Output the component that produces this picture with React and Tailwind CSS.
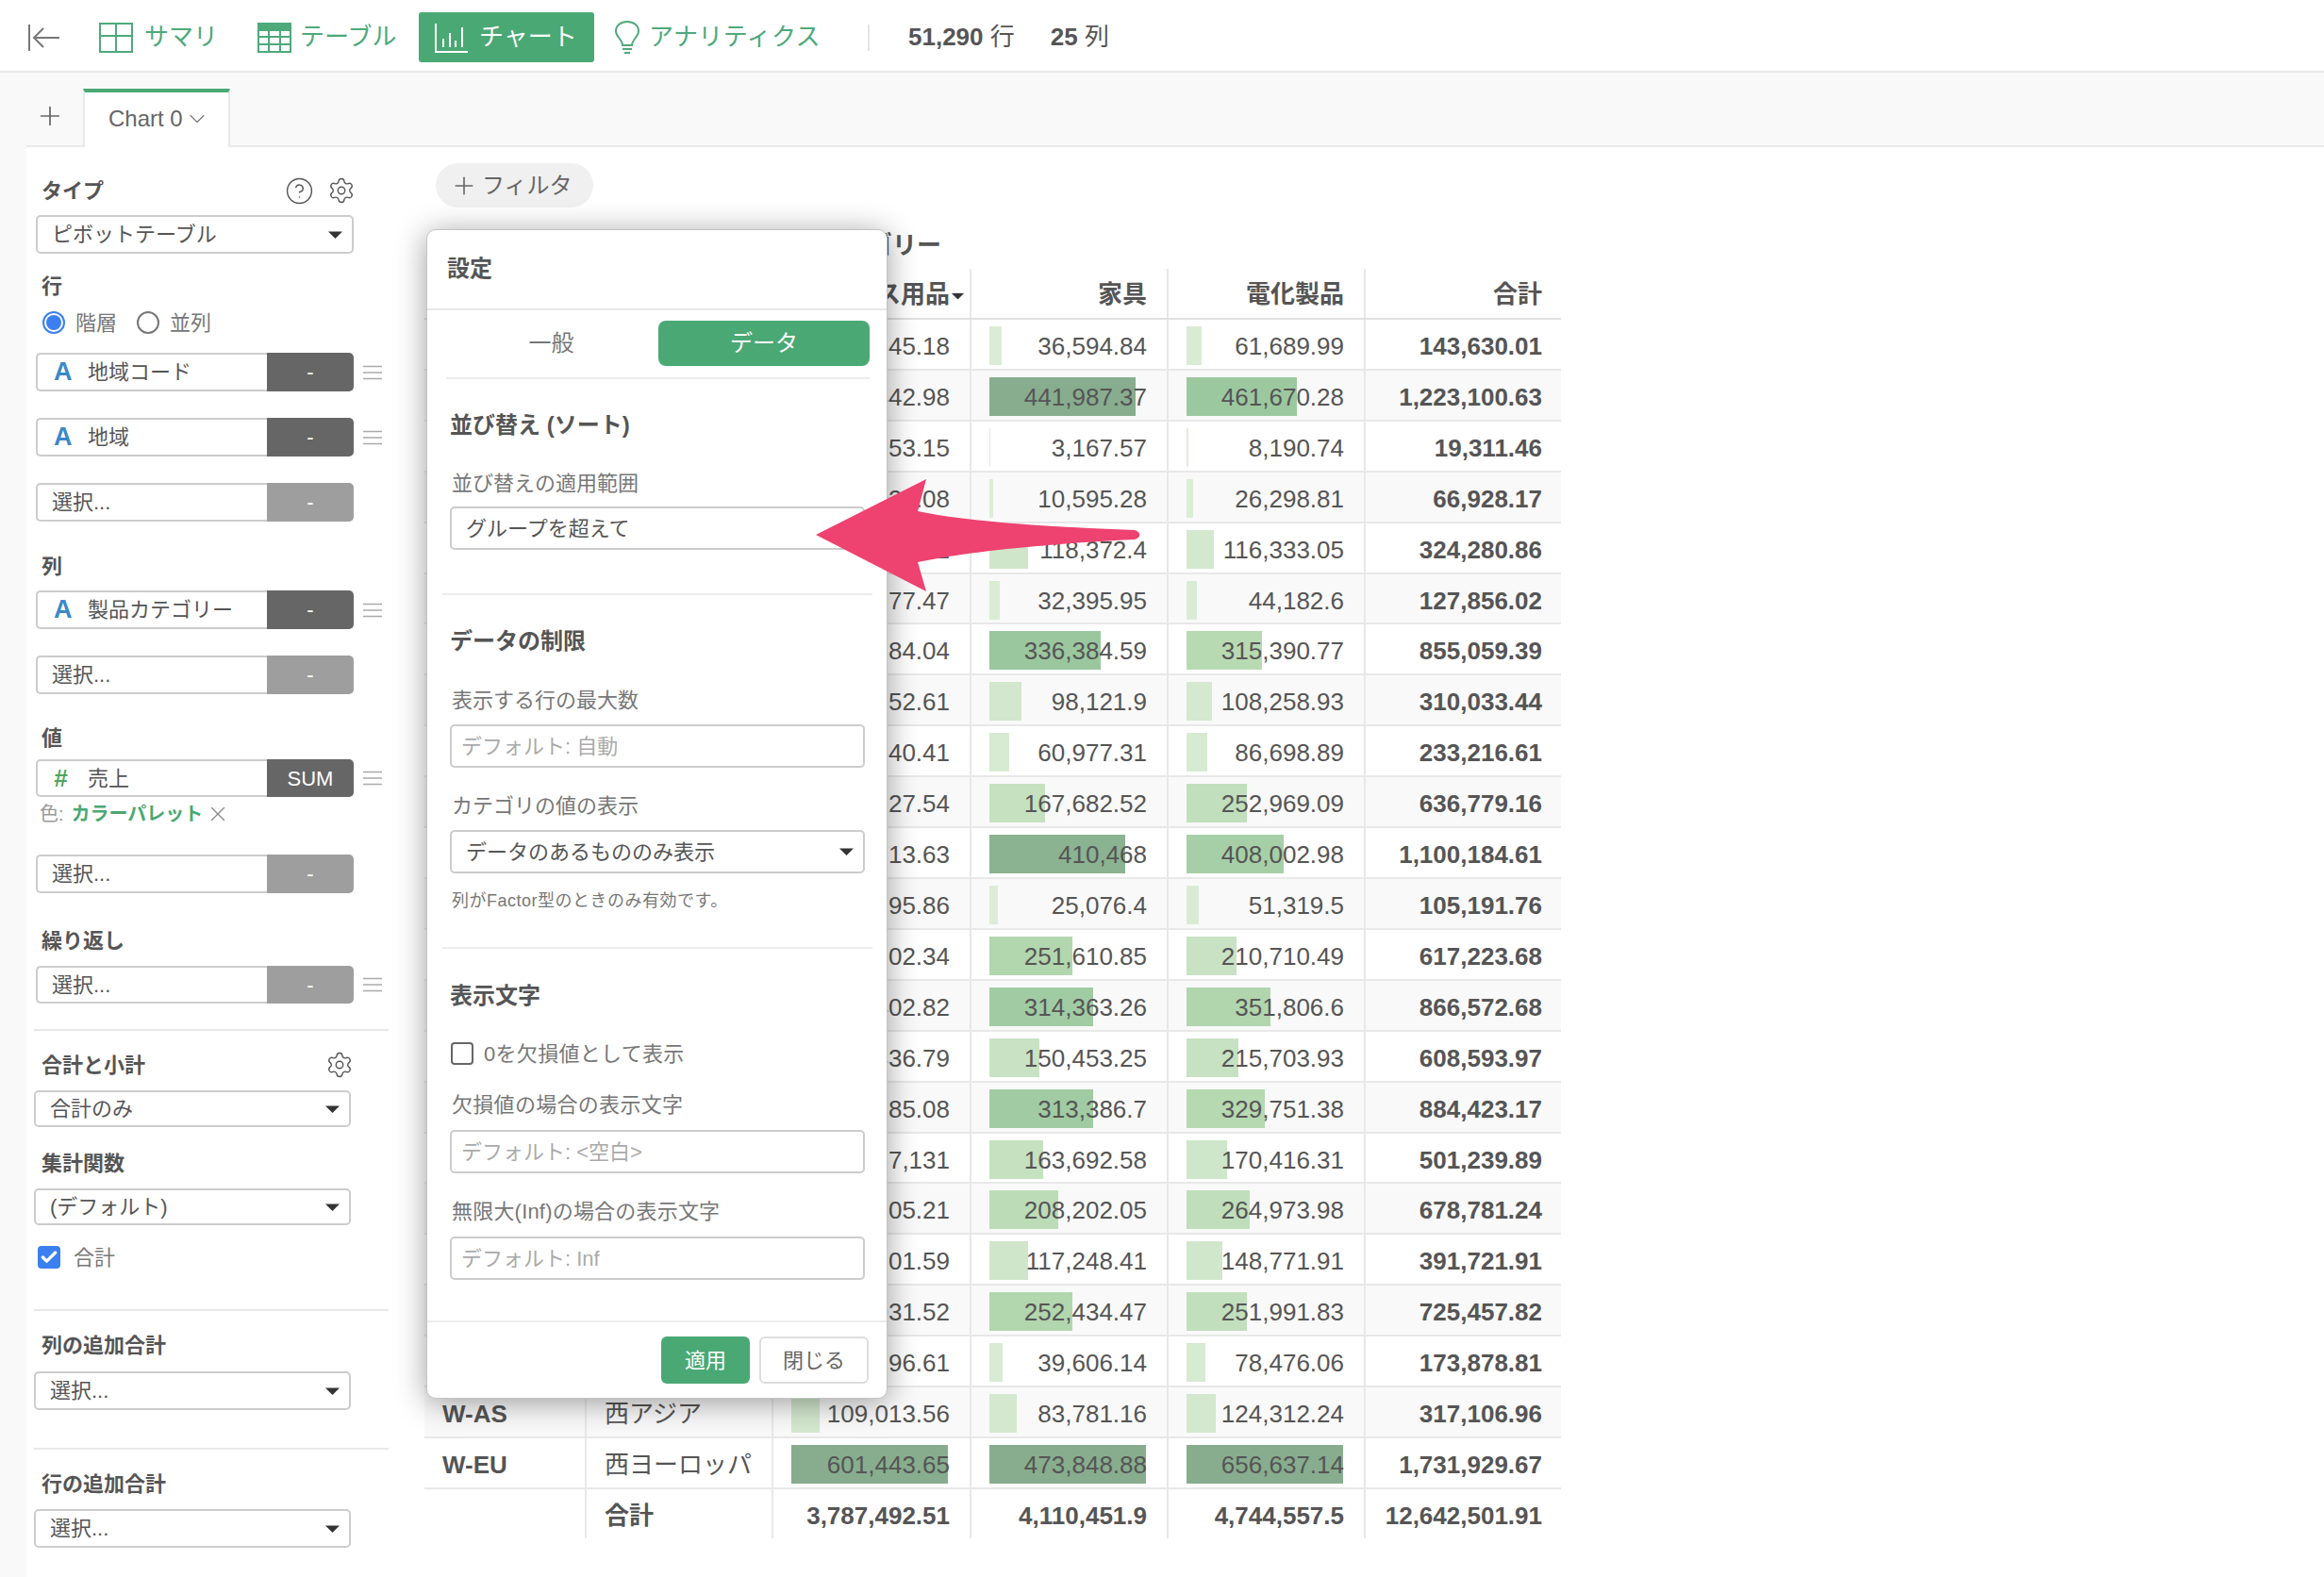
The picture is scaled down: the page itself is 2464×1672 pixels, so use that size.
import React from 'react';
import { Settings, CircleHelp, Plus, ChevronDown, Check, X } from 'lucide-react';

const office = ['45,345.18','319,442.98','7,953.15','30,034.08','89,575.42','51,277.47','203,284.04','103,652.61','85,540.41','216,127.54','281,713.63','28,795.86','154,902.34','200,402.82','242,436.79','241,285.08','167,131','205,605.21','125,701.59','221,031.52','55,796.61','109,013.56','601,443.65'];
const furn = ['36,594.84','441,987.37','3,167.57','10,595.28','118,372.4','32,395.95','336,384.59','98,121.9','60,977.31','167,682.52','410,468','25,076.4','251,610.85','314,363.26','150,453.25','313,386.7','163,692.58','208,202.05','117,248.41','252,434.47','39,606.14','83,781.16','473,848.88'];
const elec = ['61,689.99','461,670.28','8,190.74','26,298.81','116,333.05','44,182.6','315,390.77','108,258.93','86,698.89','252,969.09','408,002.98','51,319.5','210,710.49','351,806.6','215,703.93','329,751.38','170,416.31','264,973.98','148,771.91','251,991.83','78,476.06','124,312.24','656,637.14'];
const total = ['143,630.01','1,223,100.63','19,311.46','66,928.17','324,280.86','127,856.02','855,059.39','310,033.44','233,216.61','636,779.16','1,100,184.61','105,191.76','617,223.68','866,572.68','608,593.97','884,423.17','501,239.89','678,781.24','391,721.91','725,457.82','173,878.81','317,106.96','1,731,929.67'];

const num = (s) => parseFloat(s.replace(/,/g, ''));
const stops = [[0,[223,238,218]],[0.25,[207,230,202]],[0.5,[182,217,177]],[0.7,[156,200,160]],[0.9,[135,173,142]],[1,[135,173,142]]];
function barColor(r) {
  for (let i = 1; i < stops.length; i++) {
    if (r <= stops[i][0]) {
      const [a, ca] = stops[i - 1];
      const [b, cb] = stops[i];
      const t = (r - a) / (b - a);
      return `rgb(${ca.map((c, j) => Math.round(c + (cb[j] - c) * t)).join(',')})`;
    }
  }
  return 'rgb(135,173,142)';
}

function BarCell({ value, max, w }) {
  const r = num(value) / max;
  return (
    <div className={`relative h-full border-l-2 border-[#e8e8e8] text-right pr-[21px] leading-[57px] ${w}`}>
      <div className="absolute left-[19px] top-[7px] h-[41px]" style={{ width: `${Math.max(r * 166, 1)}px`, background: barColor(r) }} />
      <span className="relative">{value}</span>
    </div>
  );
}

function Caret({ className = '' }) {
  return (
    <svg width="15" height="8" viewBox="0 0 15 8" className={className}>
      <path d="M0 0.5H15L7.5 8Z" fill="#333" />
    </svg>
  );
}

function SideLabel({ children, className = '' }) {
  return <div className={`h-[30px] leading-[32px] text-[22px] font-bold text-[#555] ml-[8px] ${className}`}>{children}</div>;
}

function SideSelect({ children, className = '', w = 'w-[336px]', h = 'h-[41px]' }) {
  return (
    <div className={`flex items-center justify-between border-2 border-[#ccc] rounded-[5px] bg-white pl-[15px] pr-[10px] text-[22px] text-[#555] ${w} ${h} ${className}`}>
      <span>{children}</span>
      <Caret />
    </div>
  );
}

function Menu() {
  return (
    <svg width="20" height="16" viewBox="0 0 20 16" className="ml-[10px]">
      <path d="M0 1.5H20M0 8H20M0 14.5H20" stroke="#aaa" strokeWidth="1.6" />
    </svg>
  );
}

function Field({ type, label, btn = '-', on = false, menu = false, className = '', h = 'h-[41px]' }) {
  return (
    <div className={`flex items-center ml-[2px] ${className}`}>
      <div className={`flex w-[337px] ${h}`}>
        <div className="flex-1 flex items-center border-2 border-r-0 border-[#ccc] rounded-l-[5px] bg-white pl-[15px] text-[22px] text-[#555]">
          {type === 'A' && <span className="w-[38px] pl-[2px] font-bold text-[27px] text-[#3b88c9]">A</span>}
          {type === '#' && <span className="w-[38px] pl-[2px] font-bold text-[26px] italic text-[#4fa55b]">#</span>}
          <span>{label}</span>
        </div>
        <div className={`w-[92px] flex items-center justify-center rounded-r-[5px] text-white text-[22px] ${on ? 'bg-[#666]' : 'bg-[#9e9e9e]'}`}>{btn}</div>
      </div>
      {menu && <Menu />}
    </div>
  );
}

function ModalLabel({ children, className = '' }) {
  return <div className={`h-[30px] leading-[30px] text-[22px] text-[#777] ml-[26px] ${className}`}>{children}</div>;
}
function ModalHead({ children, className = '' }) {
  return <div className={`h-[30px] leading-[31px] text-[24px] font-bold text-[#555] ml-[24px] ${className}`}>{children}</div>;
}
function ModalInput({ children, className = '' }) {
  return (
    <div className={`ml-[24px] w-[440px] h-[46px] flex items-center border-2 border-[#ccc] rounded-[5px] pl-[10px] text-[22px] text-[#aaa] ${className}`}>{children}</div>
  );
}
function ModalSelect({ children, className = '' }) {
  return (
    <div className={`ml-[24px] w-[440px] h-[46px] flex items-center justify-between border-2 border-[#ccc] rounded-[5px] pl-[15px] pr-[10px] text-[22px] text-[#555] ${className}`}>
      <span>{children}</span>
      <Caret />
    </div>
  );
}

const ColorGreen = '#4aa874';

function NavText({ children, className = '' }) {
  return <span className={`text-[26px] text-[#4ea97b] ${className}`}>{children}</span>;
}

export default function App() {
  return (
    <div className="relative h-[1672px] w-[2464px] overflow-hidden bg-[#f9f9f9] font-['Liberation_Sans','Noto_Sans_CJK_JP',sans-serif] text-[#555]">
      {/* top bar */}
      <div className="h-[77px] bg-white border-b-2 border-[#e8e8e8] flex items-center pl-[30px] pt-[4px]">
        <svg width="34" height="30" viewBox="0 0 34 30" fill="none" stroke="#777" strokeWidth="2">
          <path d="M1 1V29" />
          <path d="M33 15H7M16 5L6 15L16 25" />
        </svg>
        <svg width="36" height="32" viewBox="0 0 36 32" fill="none" stroke="#4ea97b" strokeWidth="2" className="ml-[41px]">
          <rect x="1" y="1" width="34" height="30" />
          <path d="M18 1V31M1 14H35" />
        </svg>
        <NavText className="ml-[12px] w-[120px]">サマリ</NavText>
        <svg width="36" height="32" viewBox="0 0 36 32" fill="none" stroke="#4ea97b" strokeWidth="2">
          <rect x="1" y="1" width="34" height="30" />
          <rect x="1" y="1" width="34" height="7" fill="#4ea97b" />
          <path d="M12 1V31M24 1V31M1 15H35M1 23H35" />
        </svg>
        <NavText className="ml-[9px] w-[126px]">テーブル</NavText>
        <div className="h-[53px] w-[186px] bg-[#4aa874] rounded-[3px] flex items-center pl-[17px]">
          <svg width="36" height="32" viewBox="0 0 36 32" fill="none" stroke="#fff" strokeWidth="2">
            <path d="M1 1V31H35" />
            <path d="M9 17V26M16 11V26M22 19V26M29 5V26" strokeWidth="2" />
          </svg>
          <span className="ml-[11px] text-[26px] text-white">チャート</span>
        </div>
        <svg width="30" height="36" viewBox="0 0 30 36" fill="none" stroke="#4ea97b" strokeWidth="2" className="ml-[20px]">
          <path d="M10 26C10 20 3 17 3 11C3 5 8 1 15 1C22 1 27 5 27 11C27 17 20 20 20 26Z" />
          <path d="M10 30H20M12 34H18" />
        </svg>
        <NavText className="ml-[8px] w-[232px] tracking-[0.4px]">アナリティクス</NavText>
        <div className="w-[2px] h-[28px] bg-[#e4e4e4]" />
        <span className="ml-[41px] text-[26px] text-[#555]"><b>51,290</b> 行</span>
        <span className="ml-[38px] text-[26px] text-[#555]"><b>25</b> 列</span>
      </div>

      {/* tab row */}
      <div className="ml-[28px] h-[79px] border-b-2 border-[#e8e8e8] flex items-end">
        <div className="w-[60px] h-[60px] flex items-center justify-center pr-[10px] pb-[3px] text-[#666]">
          <Plus size={32} strokeWidth={1.3} />
        </div>
        <div className="-mb-[2px] w-[156px] h-[62px] bg-white border-x-2 border-x-[#e8e8e8] border-t-4 border-t-[#4aa874] flex items-center pl-[25px] pb-[2px] text-[24px] text-[#666]">
          Chart 0
          <ChevronDown size={28} strokeWidth={1} className="ml-[1px] text-[#777]" />
        </div>
      </div>

      {/* body */}
      <div className="ml-[28px] h-[1516px] bg-white flex">
        {/* sidebar */}
        <div className="w-[422px] pl-[8px] pt-[31px]">
          <div className="flex items-center w-[341px] h-[30px]">
            <SideLabel className="flex-1">タイプ</SideLabel>
            <CircleHelp size={31} strokeWidth={1.1} className="text-[#555] mr-[14px]" />
            <Settings size={30} strokeWidth={1.1} className="text-[#555]" />
          </div>
          <SideSelect w="w-[337px]" className="mt-[11px] ml-[2px]">ピボットテーブル</SideSelect>
          <SideLabel className="mt-[19px]">行</SideLabel>
          <div className="mt-[9px] h-[30px] ml-[9px] flex items-center text-[22px] text-[#777]">
            <span className="w-[24px] h-[24px] rounded-full border-2 border-[#3b7ff0] flex items-center justify-center">
              <span className="w-[16px] h-[16px] rounded-full bg-[#3b7ff0]" />
            </span>
            <span className="ml-[11px]">階層</span>
            <span className="ml-[21px] w-[24px] h-[24px] rounded-full border-2 border-[#777]" />
            <span className="ml-[11px]">並列</span>
          </div>
          <Field type="A" label="地域コード" on menu className="mt-[17px]" />
          <Field type="A" label="地域" on menu className="mt-[28px]" />
          <Field label="選択..." className="mt-[28px]" />
          <SideLabel className="mt-[32px]">列</SideLabel>
          <Field type="A" label="製品カテゴリー" on menu className="mt-[11px]" />
          <Field label="選択..." className="mt-[28px]" />
          <SideLabel className="mt-[31px]">値</SideLabel>
          <Field type="#" label="売上" btn="SUM" on menu className="mt-[8px]" h="h-[40px]" />
          <div className="mt-[6px] h-[24px] leading-[24px] ml-[6px] flex items-center text-[20px] text-[#999]">
            色:<b className="ml-[8px] text-[#4aa874]">カラーパレット</b>
            <X size={26} strokeWidth={1.2} className="ml-[3px] text-[#888]" />
          </div>
          <Field label="選択..." className="mt-[31px]" />
          <SideLabel className="mt-[35px]">繰り返し</SideLabel>
          <Field label="選択..." menu className="mt-[12px]" h="h-[40px]" />
          <div className="mt-[27px] h-[2px] w-[376px] bg-[#e8e8e8]" />
          <div className="mt-[21px] flex items-center w-[339px] h-[30px]">
            <SideLabel className="flex-1">合計と小計</SideLabel>
            <Settings size={30} strokeWidth={1.1} className="text-[#555]" />
          </div>
          <SideSelect className="mt-[12px]" h="h-[39px]">合計のみ</SideSelect>
          <SideLabel className="mt-[23px]">集計関数</SideLabel>
          <SideSelect className="mt-[12px]" h="h-[39px]">(デフォルト)</SideSelect>
          <div className="mt-[22px] h-[24px] ml-[4px] flex items-center text-[22px] text-[#777]">
            <span className="w-[24px] h-[24px] rounded-[4px] bg-[#3b7ff0] flex items-center justify-center">
              <Check size={20} strokeWidth={4} className="text-white" />
            </span>
            <span className="ml-[14px]">合計</span>
          </div>
          <div className="mt-[43px] h-[2px] w-[376px] bg-[#e8e8e8]" />
          <SideLabel className="mt-[21px]">列の追加合計</SideLabel>
          <SideSelect className="mt-[13px]">選択...</SideSelect>
          <div className="mt-[40px] h-[2px] w-[376px] bg-[#e8e8e8]" />
          <SideLabel className="mt-[21px]">行の追加合計</SideLabel>
          <SideSelect className="mt-[12px]">選択...</SideSelect>
        </div>

        {/* main */}
        <div className="w-[1205px] pt-[17px]">
          <div className="ml-[12px] w-[167px] h-[47px] rounded-full bg-[#f0f0f0] flex items-center pl-[15px] text-[24px] text-[#666]">
            <Plus size={30} strokeWidth={1.3} className="mr-[4px]" />
            フィルタ
          </div>
          <div className="mt-[25px] h-[30px] leading-[31px] pl-[366px] text-[26px] font-bold text-[#555]">製品カテゴリー</div>
          <div className="mt-[10px] text-[26px] text-[#555]">
            <div className="h-[54px] flex border-b-2 border-[#e0e0e0] font-bold leading-[54px]">
              <div className="w-[170px]" />
              <div className="w-[198px]" />
              <div className="w-[210px] border-l-2 border-[#e8e8e8] pr-[21px] flex justify-end relative">
                オフィス用品
                <Caret className="absolute right-[5px] top-[25px] scale-90" />
              </div>
              <div className="w-[209px] border-l-2 border-[#e8e8e8] pr-[21px] text-right">家具</div>
              <div className="w-[209px] border-l-2 border-[#e8e8e8] pr-[21px] text-right">電化製品</div>
              <div className="w-[208px] border-l-2 border-[#e8e8e8] pr-[19px] text-right">合計</div>
            </div>
            {office.map((o, i) => (
              <div key={i} className={`h-[53.91px] flex border-b-2 border-[#e8e8e8] ${i % 2 === 1 ? 'bg-[#f9f9f9]' : 'bg-white'}`}>
                <div className="w-[170px] pl-[19px] font-bold leading-[57px]">{i === 21 ? 'W-AS' : i === 22 ? 'W-EU' : ''}</div>
                <div className="w-[198px] border-l-2 border-[#e8e8e8] pl-[19px] leading-[57px]">{i === 21 ? '西アジア' : i === 22 ? '西ヨーロッパ' : ''}</div>
                <BarCell value={o} max={601443.65} w="w-[210px]" />
                <BarCell value={furn[i]} max={473848.88} w="w-[209px]" />
                <BarCell value={elec[i]} max={656637.14} w="w-[209px]" />
                <div className="w-[208px] border-l-2 border-[#e8e8e8] pr-[19px] text-right font-bold leading-[57px]">{total[i]}</div>
              </div>
            ))}
            <div className="h-[52px] flex font-bold leading-[57px]">
              <div className="w-[170px]" />
              <div className="w-[198px] border-l-2 border-[#e8e8e8] pl-[19px]">合計</div>
              <div className="w-[210px] border-l-2 border-[#e8e8e8] pr-[21px] text-right">3,787,492.51</div>
              <div className="w-[209px] border-l-2 border-[#e8e8e8] pr-[21px] text-right">4,110,451.9</div>
              <div className="w-[209px] border-l-2 border-[#e8e8e8] pr-[21px] text-right">4,744,557.5</div>
              <div className="w-[208px] border-l-2 border-[#e8e8e8] pr-[19px] text-right">12,642,501.91</div>
            </div>
          </div>
        </div>
      </div>

      {/* settings modal */}
      <div className="absolute left-[452px] top-[243px] w-[489px] h-[1240px] bg-white rounded-[10px] border border-[#c4c4c4] shadow-[0_4px_32px_rgba(0,0,0,0.38)] pt-[26px]">
        <div className="h-[30px] leading-[30px] ml-[21px] text-[24px] font-bold text-[#555]">設定</div>
        <div className="mt-[27px] h-[2px] bg-[#e8e8e8]" />
        <div className="mt-[11px] flex items-center h-[48px] pl-[20px]">
          <div className="w-[225px] text-center text-[24px] text-[#777] pr-[2px]">一般</div>
          <div className="w-[224px] h-[48px] rounded-[8px] flex items-center justify-center text-[24px] text-white" style={{ background: ColorGreen }}>データ</div>
        </div>
        <div className="mt-[12px] ml-[20px] w-[449px] h-[2px] bg-[#ececec]" />
        <ModalHead className="mt-[33px]">並び替え (ソート)</ModalHead>
        <ModalLabel className="mt-[33px]">並び替えの適用範囲</ModalLabel>
        <ModalSelect className="mt-[9px]">グループを超えて</ModalSelect>
        <div className="mt-[46px] ml-[16px] w-[456px] h-[2px] bg-[#ececec]" />
        <ModalHead className="mt-[33px]">データの制限</ModalHead>
        <ModalLabel className="mt-[34px]">表示する行の最大数</ModalLabel>
        <ModalInput className="mt-[10px]">デフォルト: 自動</ModalInput>
        <ModalLabel className="mt-[26px]">カテゴリの値の表示</ModalLabel>
        <ModalSelect className="mt-[10px]">データのあるもののみ表示</ModalSelect>
        <div className="mt-[17px] ml-[26px] h-[24px] leading-[24px] text-[18px] text-[#777] tracking-[0.5px]">列がFactor型のときのみ有効です。</div>
        <div className="mt-[37px] ml-[16px] w-[456px] h-[2px] bg-[#ececec]" />
        <ModalHead className="mt-[34px]">表示文字</ModalHead>
        <div className="mt-[35px] ml-[25px] h-[24px] flex items-center text-[22px] text-[#777]">
          <span className="w-[24px] h-[24px] rounded-[4px] border-2 border-[#666]" />
          <span className="ml-[11px] tracking-[0.3px]">0を欠損値として表示</span>
        </div>
        <ModalLabel className="mt-[28px] tracking-[0.3px]">欠損値の場合の表示文字</ModalLabel>
        <ModalInput className="mt-[11px] h-[45px]">デフォルト: &lt;空白&gt;</ModalInput>
        <ModalLabel className="mt-[26px] tracking-[0.2px]">無限大(Inf)の場合の表示文字</ModalLabel>
        <ModalInput className="mt-[11px] h-[45px]">デフォルト: Inf</ModalInput>
        <div className="mt-[43px] h-[2px] bg-[#ececec]" />
        <div className="mt-[15px] flex justify-end pr-[19px] gap-[10px]">
          <div className="w-[94px] h-[50px] rounded-[6px] flex items-center justify-center text-[22px] text-white" style={{ background: ColorGreen }}>適用</div>
          <div className="w-[116px] h-[50px] rounded-[6px] border-2 border-[#ddd] flex items-center justify-center text-[22px] text-[#666]">閉じる</div>
        </div>
      </div>

      {/* annotation arrow */}
      <svg className="absolute left-[860px] top-[500px]" width="352" height="135" viewBox="0 0 352 135">
        <path d="M5 67L122 8L113 42C170 54 260 59 343 62C350 64 350 70 343 72C260 76 170 84 113 96L122 127Z" fill="#ee4270" />
      </svg>
    </div>
  );
}
